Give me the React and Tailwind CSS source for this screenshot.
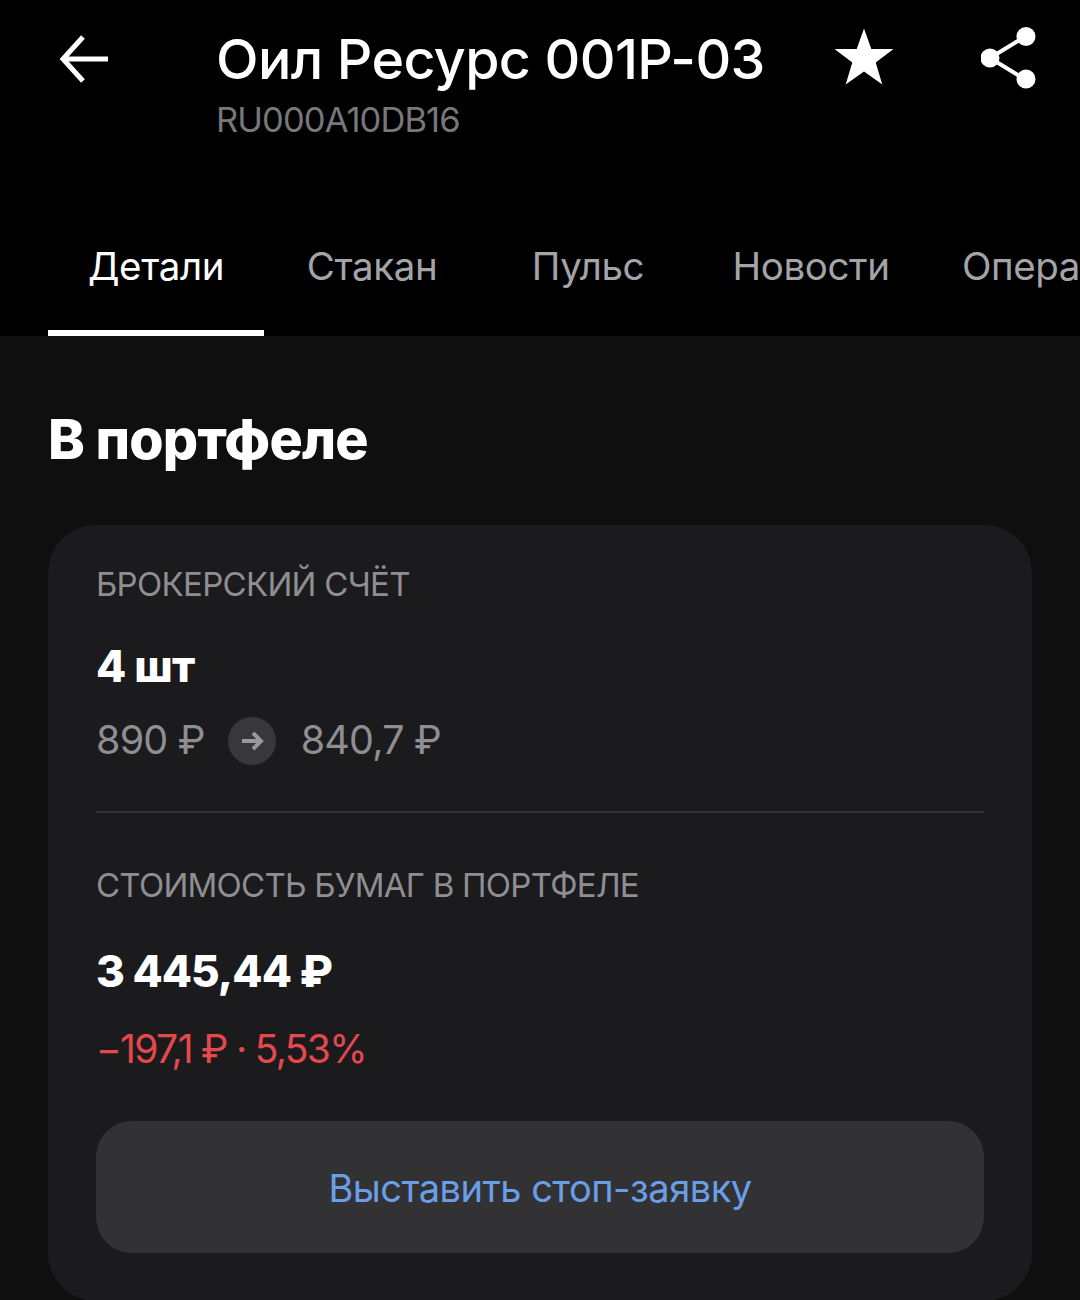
import React from 'react';

const Rub = '₽';

const App = () => {
  return (
    <div className="w-[1080px] h-[1300px] overflow-hidden bg-[#0f0f10] font-['Inter','Noto_Sans',sans-serif] text-white">
      {/* header */}
      <div className="bg-black h-[336px] flex flex-col">
        <div className="flex items-start h-[231px] pt-[26px]">
          <div className="w-[216px] pl-[58px] pt-[3px] shrink-0">
            <svg width="54" height="54" viewBox="0 0 54 54" fill="none" stroke="white" strokeWidth="5">
              <path d="M50 30H6" />
              <path d="M25 8L5 30L25 52" />
            </svg>
          </div>
          <div className="w-[601px] shrink-0">
            <div className="text-[55.5px] leading-[66px] tracking-[-0.6px] font-medium">Оил Ресурс 001P-03</div>
            <div className="text-[34.5px] leading-[40px] mt-[8px] tracking-[-0.9px] text-[#77777c]">RU000A10DB16</div>
          </div>
          <svg className="ml-[17px] shrink-0" width="60" height="60" viewBox="0 0 60 60" fill="white">
            <path d="M30 2.500L37.300 23H59.500L41.700 36.500L48.300 58.500L30 45.500L11.700 58.500L18.300 36.500L0.500 23H22.700Z" />
          </svg>
          <svg className="ml-[87px] mt-[1px] shrink-0" width="56" height="62" viewBox="0 0 56 62" fill="white" stroke="white" strokeWidth="4">
            <path d="M45 9L9 31L45 53" fill="none" />
            <circle cx="45" cy="9.500" r="7.500" />
            <circle cx="9" cy="31" r="7.500" />
            <circle cx="45" cy="52" r="7.500" />
          </svg>
        </div>
        <div className="flex flex-1 pl-[48px] overflow-hidden whitespace-nowrap text-[38.5px] text-[#a3a3a8] tracking-[-0.4px]">
          <div className="w-[216px] shrink-0 flex flex-col items-center justify-between border-b-[6px] border-white text-white">
            <span className="leading-[70px]">Детали</span>
          </div>
          <div className="w-[216px] shrink-0 text-center leading-[70px]">Стакан</div>
          <div className="w-[216px] shrink-0 text-center leading-[70px]">Пульс</div>
          <div className="w-[230px] shrink-0 text-center leading-[70px]">Новости</div>
          <div className="shrink-0 pl-[36px] leading-[70px]">Операции</div>
        </div>
      </div>

      {/* content */}
      <div className="px-[48px]">
        <h2 className="text-[55.5px] leading-[60px] font-extrabold tracking-[-0.8px] mt-[73px]">В портфеле</h2>
        <div className="mt-[56px] h-[776px] bg-[#1b1b1d] rounded-[48px] px-[48px] pt-[38px]">
          <div className="text-[33px] leading-[42px] tracking-[-0.7px] text-[#8e8e93]">БРОКЕРСКИЙ СЧЁТ</div>
          <div className="text-[44px] leading-[54px] font-extrabold mt-[34px] tracking-[-0.8px]">4 шт</div>
          <div className="flex items-center mt-[18px] text-[39.5px] tracking-[-0.8px] text-[#8e8e93]">
            <span>890 {Rub}</span>
            <span className="ml-[23px] w-[48px] h-[48px] rounded-full bg-[#38383b] flex items-center justify-center">
              <svg width="24" height="24" viewBox="0 0 24 24" fill="none" stroke="#98989d" strokeWidth="4">
                <path d="M2 12H21" />
                <path d="M13 4L21 12L13 20" />
              </svg>
            </span>
            <span className="ml-[25px]">840,7 {Rub}</span>
          </div>
          <div className="mt-[41px] h-[2px] bg-[#323235]" />
          <div className="text-[33px] leading-[42px] tracking-[-0.75px] text-[#8e8e93] mt-[51px]">СТОИМОСТЬ БУМАГ В ПОРТФЕЛЕ</div>
          <div className="text-[44px] leading-[54px] font-extrabold mt-[38px] tracking-[-1px]">3 445,44 {Rub}</div>
          <div className="text-[39px] leading-[50px] mt-[26px] tracking-[-1.7px] text-[#e5484d]">−197,1 {Rub} · 5,53%</div>
          <button className="mt-[47px] pt-[2px] w-full h-[132px] rounded-[36px] bg-[#323234] text-[38px] tracking-[-0.5px] text-[#6a9fe8]">
            Выставить стоп-заявку
          </button>
        </div>
      </div>
    </div>
  );
};

export default App;
